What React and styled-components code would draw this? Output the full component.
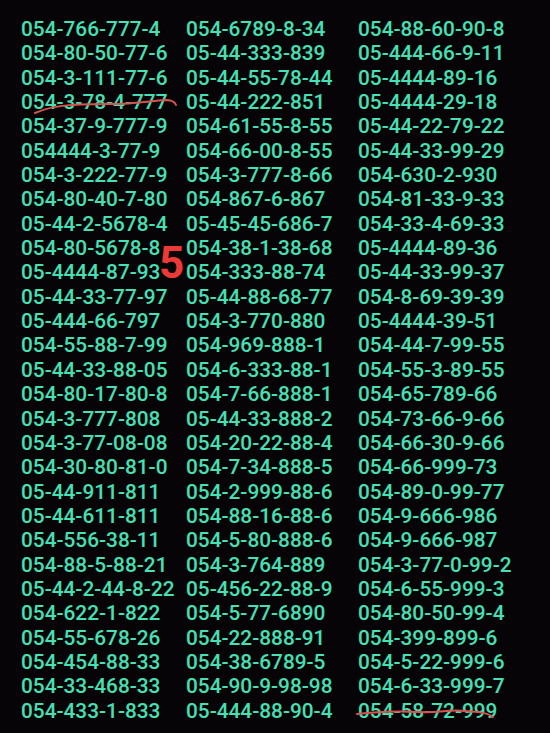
import React from "react";
import styled, { createGlobalStyle } from "styled-components";

const Global = createGlobalStyle`
  html, body { margin: 0; padding: 0; background: #060406; }
  body { width: 550px; height: 733px; overflow: hidden; }
`;

const Page = styled.div`
  position: relative;
  width: 550px;
  height: 733px;
  background: #060406;
  box-sizing: border-box;
  padding: 17px 0 0 21px;
  display: grid;
  grid-template-columns: 165px 172px 1fr;
  font-family: Roboto, "Noto Sans", sans-serif;
  font-weight: 500;
`;

const Column = styled.div`
  display: flex;
  flex-direction: column;
`;

const Number = styled.div`
  font-size: 20.8px;
  line-height: 24.35px;
  height: 24.35px;
  letter-spacing: 0;
  color: #45e0b4;
  white-space: nowrap;
`;

const Mark = styled.div`
  position: absolute;
  left: 159px;
  top: 241px;
  font-family: Roboto, "Liberation Sans", sans-serif;
  font-weight: 700;
  font-size: 44px;
  line-height: 44px;
  color: #ec3b36;
`;

const Strike = styled.svg`
  position: absolute;
  left: 0;
  top: 0;
  pointer-events: none;
`;

const col1 = [
  "054-766-777-4","054-80-50-77-6","054-3-111-77-6","054-3-78-4-777","054-37-9-777-9",
  "054444-3-77-9","054-3-222-77-9","054-80-40-7-80","05-44-2-5678-4","054-80-5678-8",
  "05-4444-87-93","05-44-33-77-97","05-444-66-797","054-55-88-7-99","05-44-33-88-05",
  "054-80-17-80-8","054-3-777-808","054-3-77-08-08","054-30-80-81-0","05-44-911-811",
  "05-44-611-811","054-556-38-11","054-88-5-88-21","05-44-2-44-8-22","054-622-1-822",
  "054-55-678-26","054-454-88-33","054-33-468-33","054-433-1-833",
];
const col2 = [
  "054-6789-8-34","05-44-333-839","05-44-55-78-44","05-44-222-851","054-61-55-8-55",
  "054-66-00-8-55","054-3-777-8-66","054-867-6-867","05-45-45-686-7","054-38-1-38-68",
  "054-333-88-74","05-44-88-68-77","054-3-770-880","054-969-888-1","054-6-333-88-1",
  "054-7-66-888-1","05-44-33-888-2","054-20-22-88-4","054-7-34-888-5","054-2-999-88-6",
  "054-88-16-88-6","054-5-80-888-6","054-3-764-889","05-456-22-88-9","054-5-77-6890",
  "054-22-888-91","054-38-6789-5","054-90-9-98-98","05-444-88-90-4",
];
const col3 = [
  "054-88-60-90-8","05-444-66-9-11","05-4444-89-16","05-4444-29-18","05-44-22-79-22",
  "05-44-33-99-29","054-630-2-930","054-81-33-9-33","054-33-4-69-33","05-4444-89-36",
  "05-44-33-99-37","054-8-69-39-39","05-4444-39-51","054-44-7-99-55","054-55-3-89-55",
  "054-65-789-66","054-73-66-9-66","054-66-30-9-66","054-66-999-73","054-89-0-99-77",
  "054-9-666-986","054-9-666-987","054-3-77-0-99-2","054-6-55-999-3","054-80-50-99-4",
  "054-399-899-6","054-5-22-999-6","054-6-33-999-7","054-58-72-999",
];

export default function App() {
  return (
    <>
      <Global />
      <Page>
        {[col1, col2, col3].map((col, i) => (
          <Column key={i}>
            {col.map((n, j) => (
              <Number key={j}>{n}</Number>
            ))}
          </Column>
        ))}
        <Mark>5</Mark>
        <Strike width="550" height="733" viewBox="0 0 550 733">
          <path
            d="M35,113 C55,104 80,104 110,104 C135,104 150,101 165,100 C171,100 175,102 176,105"
            fill="none"
            stroke="#d9524f"
            strokeWidth="2"
            strokeLinecap="round"
          />
          <path
            d="M357,714 C380,711 400,711 420,712 C440,713 450,709 465,711 C480,712 488,713 493,717"
            fill="none"
            stroke="#d9524f"
            strokeWidth="2"
            strokeLinecap="round"
          />
        </Strike>
      </Page>
    </>
  );
}
